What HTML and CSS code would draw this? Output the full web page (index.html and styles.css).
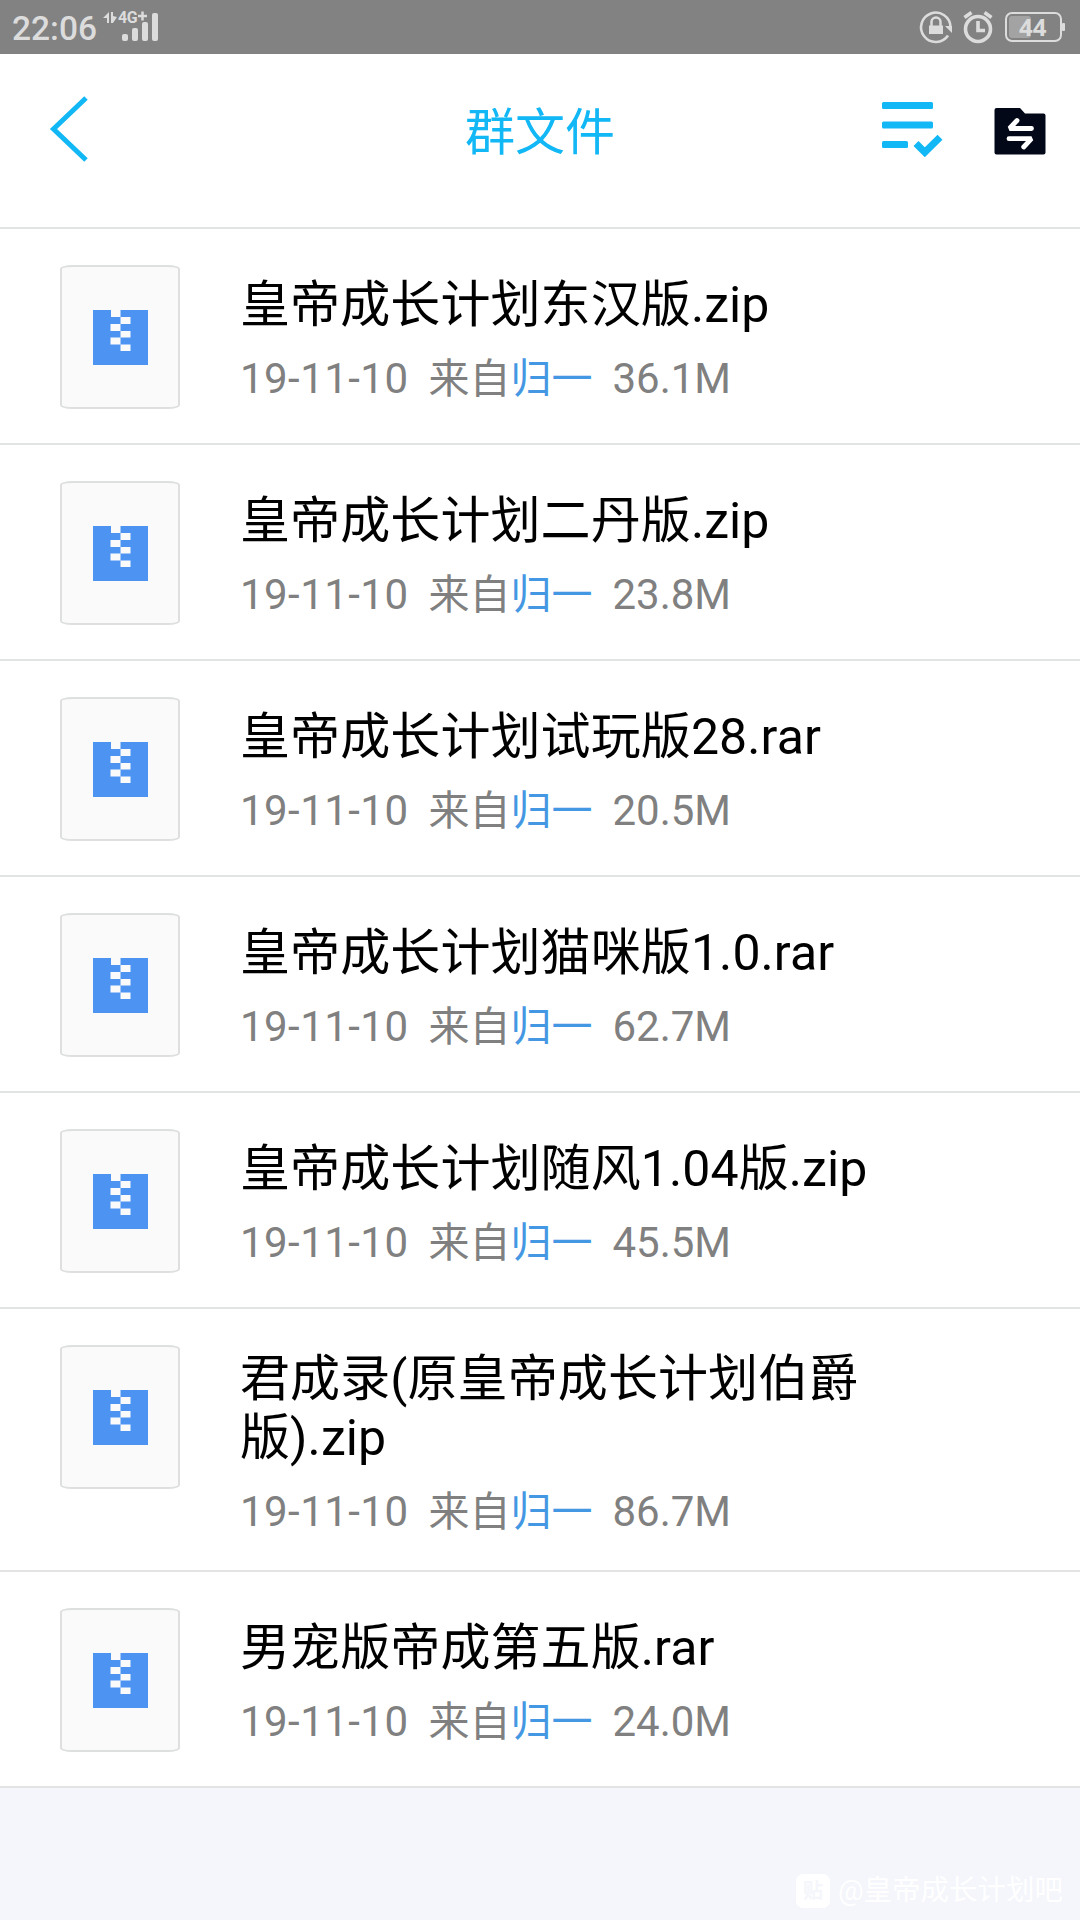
FILE: index.html
```html
<!DOCTYPE html>
<html lang="zh-CN">
<head>
    <meta charset="UTF-8">
    <meta name="viewport" content="width=1080">
    <title>群文件</title>
    <link rel="stylesheet" href="styles.css">
</head>
<body>
    <!-- Shared file icon -->
    <svg class="defs" width="0" height="0">
        <symbol id="zip" viewBox="0 0 55 55">
            <path fill="#4d94f2" d="M0 0h55v55H0z"/>
            <path fill="#fafafa" d="M18 0h9.500v7h-9.500zM27.500 7h10v7h-10zM17.500 14h10v7h-10zM27.500 21h10v6.500h-10zM17.500 27.500h10v7h-10zM27.500 34.500h10v6.500h-10z"/>
        </symbol>
    </svg>

    <!-- Status bar -->
    <div class="status">
        <span class="time">22:06</span>
        <svg class="signal" width="56" height="32" viewBox="102 10 56 32">
            <path fill="#dcdcdc" d="M109 12v11h-2v-5h-4zM111 12h2v4l4 1-4 6h-2z"/>
            <text x="118" y="23" class="net">4G</text>
            <path stroke="#dcdcdc" stroke-width="2.500" d="M138 16h9M142.500 11.500v9"/>
            <g fill="#dcdcdc">
                <rect x="122" y="34" width="6" height="7" rx="2"/>
                <rect x="132" y="28" width="6" height="13" rx="2"/>
                <rect x="142" y="22" width="6" height="19" rx="2"/>
                <rect x="152" y="13" width="6" height="28" rx="2"/>
            </g>
        </svg>
        <svg class="status-right" width="150" height="36" viewBox="918 9 150 36">
            <!-- rotation lock -->
            <path fill="none" stroke="#dcdcdc" stroke-width="2.600" d="M948 35.500A14.700 14.700 0 1 1 950.500 27"/>
            <path fill="#dcdcdc" d="M945 26h7v7z"/>
            <rect x="929" y="25.500" width="14" height="8.500" fill="#dcdcdc"/>
            <path fill="none" stroke="#dcdcdc" stroke-width="2.500" d="M931.500 26v-4a4.500 4.500 0 0 1 9 0v4"/>
            <!-- alarm -->
            <circle cx="978" cy="29" r="12.500" fill="none" stroke="#dcdcdc" stroke-width="3.600"/>
            <path fill="none" stroke="#dcdcdc" stroke-width="3.600" d="M978 21v9.500h7M964.500 17.500l7-5M991.500 17.500l-7-5"/>
            <!-- battery -->
            <rect x="1009" y="16" width="22" height="22" rx="3" fill="#a3a3a3"/>
            <rect x="1006" y="13" width="55" height="28" rx="6" fill="none" stroke="#dcdcdc" stroke-width="2"/>
            <rect x="1062" y="23" width="3" height="8" rx="1" fill="#dcdcdc"/>
            <text x="1019" y="36" class="level">44</text>
        </svg>
    </div>

    <!-- Title bar -->
    <div class="header">
        <svg class="back" width="42" height="68" viewBox="48 95 42 68">
            <path fill="none" stroke="#12b7f5" stroke-width="5" d="M86 98L53.500 129L86 160"/>
        </svg>
        <h1>群文件</h1>
        <div class="actions">
            <svg width="62" height="56" viewBox="881 101 62 56">
                <g fill="#12b7f5">
                    <rect x="882" y="102" width="51" height="7" rx="1.500"/>
                    <rect x="882" y="121.500" width="51" height="7" rx="1.500"/>
                    <rect x="882" y="141" width="26" height="7" rx="1.500"/>
                </g>
                <path fill="none" stroke="#12b7f5" stroke-width="7" d="M916 143.500l8.800 8.800L940 137.200"/>
            </svg>
            <svg width="52" height="48" viewBox="994 107 52 48">
                <path fill="#020818" d="M996.500 108H1020l5 5.500h18.500a2 2 0 0 1 2 2V152.500a2 2 0 0 1-2 2h-47a2 2 0 0 1-2-2v-42.500a2 2 0 0 1 2-2z"/>
                <path fill="none" stroke="#fff" stroke-width="4.800" stroke-linecap="round" stroke-linejoin="bevel" d="M1031.500 128.500H1009.500L1017 120.500M1009 138.700h22.500L1023.700 147"/>
            </svg>
        </div>
    </div>

    <!-- File list -->
    <div class="list">
        <div class="file">
            <div class="thumb"><svg width="55" height="55"><use href="#zip"/></svg></div>
            <div class="info">
                <div class="name">皇帝成长计划东汉版.zip</div>
                <div class="meta"><span class="date">19-11-10</span><span class="from">来自<b>归一</b></span><span>36.1M</span></div>
            </div>
        </div>
        <div class="file">
            <div class="thumb"><svg width="55" height="55"><use href="#zip"/></svg></div>
            <div class="info">
                <div class="name">皇帝成长计划二丹版.zip</div>
                <div class="meta"><span class="date">19-11-10</span><span class="from">来自<b>归一</b></span><span>23.8M</span></div>
            </div>
        </div>
        <div class="file">
            <div class="thumb"><svg width="55" height="55"><use href="#zip"/></svg></div>
            <div class="info">
                <div class="name">皇帝成长计划试玩版28.rar</div>
                <div class="meta"><span class="date">19-11-10</span><span class="from">来自<b>归一</b></span><span>20.5M</span></div>
            </div>
        </div>
        <div class="file">
            <div class="thumb"><svg width="55" height="55"><use href="#zip"/></svg></div>
            <div class="info">
                <div class="name">皇帝成长计划猫咪版1.0.rar</div>
                <div class="meta"><span class="date">19-11-10</span><span class="from">来自<b>归一</b></span><span>62.7M</span></div>
            </div>
        </div>
        <div class="file">
            <div class="thumb"><svg width="55" height="55"><use href="#zip"/></svg></div>
            <div class="info">
                <div class="name">皇帝成长计划随风1.04版.zip</div>
                <div class="meta"><span class="date">19-11-10</span><span class="from">来自<b>归一</b></span><span>45.5M</span></div>
            </div>
        </div>
        <div class="file">
            <div class="thumb"><svg width="55" height="55"><use href="#zip"/></svg></div>
            <div class="info">
                <div class="name">君成录(原皇帝成长计划伯爵版).zip</div>
                <div class="meta"><span class="date">19-11-10</span><span class="from">来自<b>归一</b></span><span>86.7M</span></div>
            </div>
        </div>
        <div class="file">
            <div class="thumb"><svg width="55" height="55"><use href="#zip"/></svg></div>
            <div class="info">
                <div class="name">男宠版帝成第五版.rar</div>
                <div class="meta"><span class="date">19-11-10</span><span class="from">来自<b>归一</b></span><span>24.0M</span></div>
            </div>
        </div>
    </div>

    <div class="watermark">
        <span class="badge">贴</span>
        <span>@皇帝成长计划吧</span>
    </div>
</body>
</html>
```

FILE: styles.css
```css
* {
    box-sizing: border-box;
}

body {
    margin: 0;
    width: 1080px;
    height: 1920px;
    display: flex;
    flex-direction: column;
    overflow: hidden;
    background-color: #f4f6fb;
    font-family: Roboto, "Noto Sans CJK SC", sans-serif;
}

svg {
    display: block;
    flex-shrink: 0;
}

.defs {
    position: absolute;
}

.status {
    display: flex;
    height: 54px;
    padding-left: 12px;
    background-color: #828282;
    color: #dcdcdc;
}

.time {
    width: 90px;
    font-size: 33.500px;
    font-weight: 500;
    line-height: 57px;
}

.signal {
    margin-top: 10px;
}

.status-right {
    margin: 9px 12px 0 auto;
}

.net {
    fill: #dcdcdc;
    font-size: 16px;
    font-weight: bold;
    letter-spacing: -0.5px;
}

.level {
    fill: #dcdcdc;
    font-family: "Open Sans", sans-serif;
    font-size: 24px;
    font-weight: bold;
}

.header {
    display: grid;
    grid-template-columns: 1fr 150px 1fr;
    height: 175px;
    padding: 41px 34px 0 48px;
    background-color: #fff;
    border-bottom: 2px solid #e2e3e3;
}

.header h1 {
    margin: 1px 7px 0 -7px;
    font-size: 50px;
    font-weight: normal;
    line-height: 74px;
    white-space: nowrap;
    color: #12b7f5;
}

.actions {
    display: flex;
    justify-content: flex-end;
    gap: 51px;
    padding-top: 6px;
}

.actions svg + svg {
    margin-top: 6px;
}

.file {
    display: flex;
    min-height: 216px;
    padding: 0 180px 0 60px;
    background-color: #fff;
    border-bottom: 2px solid #e2e3e3;
}

.thumb {
    display: flex;
    flex-shrink: 0;
    align-items: center;
    justify-content: center;
    width: 120px;
    height: 144px;
    margin: 36px 60px 0 0;
    background-color: #fafafa;
    border: 2px solid #dedfdf;
    border-radius: 12px / 4px;
}

.info {
    align-self: center;
    flex: 1;
    padding: 41px 0 30px;
}

.name {
    font-size: 50px;
    line-height: 59px;
    letter-spacing: 0.1px;
    color: #000;
}

.meta {
    display: flex;
    gap: 20px;
    margin-top: 16px;
    font-size: 42px;
    line-height: 56px;
    color: #808080;
}

.date {
    letter-spacing: 0.45px;
}

.from {
    font-size: 41px;
}

.meta b {
    font-weight: normal;
    color: #4497e2;
}

.watermark {
    display: flex;
    align-items: center;
    justify-content: flex-end;
    gap: 8px;
    margin-top: auto;
    padding: 0 17px 12px 0;
    font-size: 28.500px;
    line-height: 34px;
    color: #fff;
}

.badge {
    width: 34px;
    height: 34px;
    border-radius: 7px;
    background-color: #fff;
    color: #f4f6fb;
    font-size: 20px;
    font-weight: bold;
    text-align: center;
}
```
